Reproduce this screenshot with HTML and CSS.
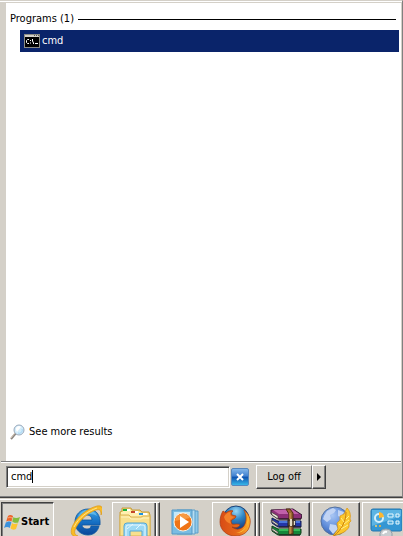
FILE: index.html
```html
<!DOCTYPE html>
<html lang="en">
<head>
    <meta charset="UTF-8">
    <meta name="viewport" content="width=device-width, initial-scale=1.0">
    <title>Start Menu</title>
    <link rel="stylesheet" href="styles.css">
</head>
<body>
    <main class="start-menu">
        <section class="results">
            <h2 class="group-title">Programs (1)</h2>
            <a href="#" class="result selected">
                <svg width="16" height="14" viewBox="0 0 16 14">
                    <rect width="16" height="14" fill="#8c8c84"/>
                    <rect x="1" y="1" width="14" height="2" fill="#d4d0c8"/>
                    <path d="M10 1h1v1h-1zM12 1h1v1h-1zM14 1h1v1h-1z" fill="#555"/>
                    <rect x="1" y="3" width="14" height="10" fill="#000"/>
                    <path d="M5 5.500H3.500L2.500 6.500V8.500L3.500 9.500H5M6.500 6v1M6.500 8.500v1M8.500 5v2l1 2v1M11 9.500h3" fill="none" stroke="#fff"/>
                </svg>
                <span>cmd</span>
            </a>
            <a href="#" class="more">
                <svg width="16" height="16" viewBox="0 0 16 16">
                    <path d="M1 15l5-6" stroke="#8a8580" stroke-width="2"/>
                    <path d="M1 14l4-5" stroke="#d8c8b8"/>
                    <circle cx="9" cy="6" r="5" fill="#d4edfb" stroke="#9aa9bb"/>
                    <path d="M6 6a3 3 0 0 1 5-3L7 8z" fill="#fff"/>
                    <path d="M8 9a3 3 0 0 0 4-4" fill="none" stroke="#a5d6f4"/>
                </svg>
                <span>See more results</span>
            </a>
        </section>

        <form class="search-bar" onsubmit="return false;">
            <div class="search-field">
                <input type="text" name="search" value="cmd" aria-label="Search programs and files">
                <span class="caret"></span>
            </div>
            <button type="reset" class="clear" aria-label="Clear search">
                <svg width="10" height="10" viewBox="0 0 10 10">
                    <path d="M2 2l6 6M8 2l-6 6" stroke="#fff" stroke-width="2"/>
                </svg>
            </button>
            <div class="logoff">
                <button type="button" class="logoff-label">Log off</button>
                <button type="button" class="logoff-arrow" aria-label="More options">
                    <svg width="4" height="8" viewBox="0 0 4 8"><path d="M0 0l4 4-4 4z"/></svg>
                </button>
            </div>
        </form>
    </main>

    <nav class="taskbar">
        <button type="button" class="start-button">
            <svg width="16" height="16" viewBox="0 0 16 16">
                <path d="M4 2q2-2 5 0L8 8Q5 6 2 8z" fill="#ef6328"/>
                <path d="M9 3q3 2 7 0l-2 6q-3 1-6-1z" fill="#83bd3c"/>
                <path d="M2 8q3-2 6 0l-2 6q-3-2-6 0z" fill="#3b91dc"/>
                <path d="M8 9q2 2 6 0l-2 6q-3 2-6-1z" fill="#fdc52f"/>
                <path d="M4 4q2-2 4 0" fill="none" stroke="#f8a878"/>
                <path d="M9 3L6 15M2 8q3-2 6 0t6 1" fill="none" stroke="#e4ddd0" stroke-width="0.600"/>
            </svg>
            <span>Start</span>
        </button>

        <div class="tasks">
            <button type="button" class="task" aria-label="Internet Explorer">
                <svg width="32" height="32" viewBox="0 0 32 32">
                    <defs>
                        <linearGradient id="ie" x2="0" y2="1">
                            <stop offset="0" stop-color="#3ba4e6"/>
                            <stop offset="0.500" stop-color="#1670c4"/>
                            <stop offset="1" stop-color="#0a4798"/>
                        </linearGradient>
                    </defs>
                    <path d="M18 4C10 4 5 10 5 17c0 8 6 13 13 13 6 0 10-4 11-9h-8c0 2-2 3-4 3-3 0-5-2-5-4h18C31 10 26 4 18 4zm-6 11c0-3 2-5 5-5s5 2 5 5z" fill="url(#ie)" stroke="#0d559e" stroke-width="0.800"/>
                    <path d="M7 14C9 8 13 5 18 5c5 0 8 3 9 6-4-3-13-3-20 3z" fill="#8bdaf7" opacity="0.500"/>
                    <path d="M8 31c-6 2-9-3-5-11C8 10 19 3 27 1c6-1 7 3 4 9 0-5-1-6-5-5C17 8 8 17 5 25c-1 3 0 5 3 6z" fill="#f9bb25" stroke="#d69113" stroke-width="0.600"/>
                    <path d="M4 22C9 12 18 6 27 3" fill="none" stroke="#ffe48b"/>
                </svg>
            </button>
            <button type="button" class="task open stacked" aria-label="Windows Explorer">
                <svg width="32" height="32" viewBox="0 0 32 32">
                    <path d="M1 31V7l2-1V3h9l1 2h8l2 2h7l1 3v21z" fill="#efcf70" stroke="#c89f3d"/>
                    <path d="M2 9V7h2V4h7l2 2h7l2 2h7l1 4H2z" fill="#fff0b0"/>
                    <path d="M4 4h7v2H4zM12 6h7v2h-7zM20 8h8v2h-8z" fill="#fff"/>
                    <path d="M4 4h4v2H4z" fill="#19b23b"/>
                    <path d="M12 6h4v2h-4z" fill="#c4472b"/>
                    <path d="M20 8h4v2h-4z" fill="#1d92df"/>
                    <path d="M1 10h9l2 2h10l2-1h7v20H1z" fill="#f8e08e" stroke="#d9b355"/>
                    <path d="M2 12h8l2 2h10l2-1h6" fill="none" stroke="#fff3c0"/>
                    <path d="M5 32V21q0-3 3-3h17q3 0 3 3v11h-5v-6H11v6z" fill="#9cd9f4" stroke="#52a6d5"/>
                    <path d="M7 31v-9q0-2 2-2h15q2 0 2 2v9M8 24L14 19M17 24l5-5" fill="none" stroke="#e4f7ff"/>
                </svg>
            </button>
            <button type="button" class="task" aria-label="Media Player">
                <svg width="32" height="32" viewBox="0 0 32 32">
                    <path d="M10 6h18v22H10z" fill="#8fc9e9" stroke="#5c9fc9"/>
                    <path d="M7 5h18v24H7z" fill="#b6def2" stroke="#5c9fc9"/>
                    <path d="M2 5h20v24H2z" fill="#79bce2" stroke="#5598c6"/>
                    <path d="M4 7h16v5L4 22z" fill="#c4e8f8"/>
                    <circle cx="13" cy="17" r="9" fill="#ef7416" stroke="#fff0dc"/>
                    <path d="M5 16a8 8 0 0 1 15-3z" fill="#f89a42"/>
                    <path d="M10 11l9 6-9 6z" fill="#fff"/>
                </svg>
            </button>
            <button type="button" class="task open stacked" aria-label="Firefox">
                <svg width="32" height="32" viewBox="0 0 32 32">
                    <defs>
                        <radialGradient id="sky" cx="0.500" cy="0.200" r="0.800">
                            <stop offset="0" stop-color="#9bd8f5"/>
                            <stop offset="0.400" stop-color="#2f86c6"/>
                            <stop offset="1" stop-color="#12296d"/>
                        </radialGradient>
                        <linearGradient id="fox" x2="1" y2="0">
                            <stop offset="0" stop-color="#d84b15"/>
                            <stop offset="0.600" stop-color="#e66a1a"/>
                            <stop offset="1" stop-color="#ffb52a"/>
                        </linearGradient>
                    </defs>
                    <circle cx="17" cy="14" r="13" fill="url(#sky)" stroke="#1c4378"/>
                    <path d="M4 6l3 2c2-2 5-3 7-2-2 1-2 3-1 4l4 1c0 3-4 3-5 5l1 3c3 1 6-1 8 1-2 3-5 3-8 2 5 4 11 2 13-3 2-5 1-10-1-14 5 4 7 9 6 14-1 8-7 12-15 12C8 31 1 25 1 17 1 13 2 9 4 6z" fill="url(#fox)" stroke="#a93b10" stroke-width="0.700"/>
                    <path d="M5 12c1-3 4-5 7-5-1 1-1 2 0 4l3 1-4 3 1 4c-3-1-6-3-7-7z" fill="#f4812a"/>
                    <path d="M29 11c2 8-4 16-12 17 8 0 12-6 12-17z" fill="#ffc83a"/>
                </svg>
            </button>
            <button type="button" class="task open" aria-label="WinRAR">
                <svg width="32" height="32" viewBox="0 0 32 32">
                    <path d="M1 5l22-1 9 6-1 4H8L1 9z" fill="#8d2f78" stroke="#32142f"/>
                    <path d="M3 5l19-1 7 5H9z" fill="#c161aa"/>
                    <path d="M2 13l6 3h23v6H8l-6-4z" fill="#2336a8" stroke="#101d52"/>
                    <path d="M9 16h21v2H9z" fill="#4a76dd"/>
                    <path d="M2 21l6 3h23v4l-1 2H8l-6-4z" fill="#14873a" stroke="#0d3b17"/>
                    <path d="M9 24h21v2H9z" fill="#35bc58"/>
                    <path d="M1 7l7 4v3l-6-4zM2 15l6 4v2l-6-4zM2 23l6 4v2l-6-4z" fill="#eee8d7" stroke="#333" stroke-width="0.700"/>
                    <path d="M9 14h22M9 22h22M9 30h21" stroke="#251b20"/>
                    <path d="M16 4h4l3 4v21h-4V9z" fill="#9b6731" stroke="#4c2b12"/>
                    <path d="M20 8v21" stroke="#d8a85a"/>
                    <rect x="18" y="15" width="7" height="6" fill="#6a5b47" stroke="#2a2119"/>
                    <path d="M20 14h2v7h-2zM24 16h1v4h-1z" fill="#e4dcc8"/>
                </svg>
            </button>
            <button type="button" class="task open" aria-label="Web editor">
                <svg width="32" height="32" viewBox="0 0 32 32">
                    <defs>
                        <radialGradient id="globe" cx="0.400" cy="0.300" r="0.700">
                            <stop offset="0" stop-color="#a8c6f4"/>
                            <stop offset="0.600" stop-color="#6390dc"/>
                            <stop offset="1" stop-color="#3764b5"/>
                        </radialGradient>
                    </defs>
                    <circle cx="15" cy="16" r="14" fill="url(#globe)" stroke="#54729f"/>
                    <path d="M4 11l3-5 6-3 3 2-2 3-4 2 1 4-4 3-4-3zM10 19l6 1 2 4-5 5-4-5zM18 5l6 2-2 6-4-2z" fill="#c1d4f4"/>
                    <path d="M27 3c3 3 4 7 3 11l1 2-2 2v4c-3 5-8 7-13 8l-3 1 5-7-1-6 3-3v-4l4-2z" fill="#fbc72c" stroke="#db930f" stroke-width="0.700"/>
                    <path d="M26 7c0 9-4 17-12 24" fill="none" stroke="#c97f13"/>
                    <path d="M26 14l3-3M24 19l5-4M21 24l7-4M24 17l-3-4M22 21l-3-2" fill="none" stroke="#fff08c"/>
                </svg>
            </button>
            <button type="button" class="task open" aria-label="Control Panel">
                <svg width="32" height="32" viewBox="0 0 32 32">
                    <rect x="1" y="4" width="31" height="22" rx="2" fill="#3496d3" stroke="#2377ae"/>
                    <path d="M2 5h29v6L2 21z" fill="#5cb4e3"/>
                    <circle cx="9" cy="13" r="4" fill="#4ba6d9" stroke="#d5f0fc" stroke-width="2"/>
                    <path d="M9 13V7a6 6 0 0 1 5 5z" fill="#ffb72f"/>
                    <path d="M18 9h5v3h-5zM26 9h3v3h-3zM18 16h5v3h-5zM26 16h3v3h-3z" fill="#4ba6d9" stroke="#e6f8ff"/>
                    <circle cx="6" cy="21" r="1" fill="#ffd463"/>
                    <circle cx="10" cy="21" r="1" fill="#ffb72f"/>
                    <path d="M10 32q-1-8 6-8 7 0 6 8z" fill="#c9cdd0" stroke="#8e9da8"/>
                    <path d="M13 29q1-3 4-2" fill="none" stroke="#fff" stroke-width="2"/>
                </svg>
            </button>
        </div>
    </nav>
</body>
</html>
```
FILE: styles.css
```css
* {
    box-sizing: border-box;
}
body {
    margin: 0;
    height: 100vh;
    display: flex;
    flex-direction: column;
    overflow: hidden;
    background-color: #d4d0c8;
    color: #000;
    font-family: Tahoma, "DejaVu Sans Condensed", sans-serif;
    font-size: 11px;
    line-height: 14px;
}
button, input {
    font: inherit;
    color: inherit;
    margin: 0;
    padding: 0;
    border: none;
    border-radius: 0;
}
svg {
    display: block;
    flex: none;
}
a {
    color: inherit;
    text-decoration: none;
}

/* Menu window */
.start-menu {
    flex: 1;
    min-height: 0;
    display: flex;
    flex-direction: column;
    border-top: 1px solid #d4d0c8;
    border-right: 1px solid #808080;
    border-bottom: 1px solid #404040;
    box-shadow: inset 0 1px #fff, inset 0 -1px #808080;
    padding: 2px 1px 1px 1px;
}
.results {
    flex: 1;
    display: flex;
    flex-direction: column;
    background-color: #fff;
    margin-left: 5px;
    padding: 9px 2px 21px 4px;
}
.group-title {
    display: flex;
    align-items: center;
    gap: 4px;
    margin: 0 3px 4px 0;
    font-size: 11px;
    font-weight: normal;
}
.group-title::after {
    content: "";
    flex: 1;
    height: 1px;
    background-color: #000;
}
.result {
    display: flex;
    align-items: center;
    gap: 2px;
    height: 22px;
    margin-left: 10px;
    padding-left: 4px;
}
.result.selected {
    background-color: #0a246a;
    color: #fff;
}
.more {
    display: flex;
    align-items: center;
    gap: 3px;
    margin-top: auto;
}

/* Search row */
.search-bar {
    display: flex;
    align-items: center;
    height: 35px;
    border-top: 1px solid #808080;
    box-shadow: inset 0 1px #fff;
    padding: 0 0 5px 5px;
}
.search-field {
    position: relative;
    flex: 0 1 224px;
}
.search-field input {
    display: block;
    width: 100%;
    height: 22px;
    padding: 0 4px;
    background-color: #fff;
    border: 1px solid;
    border-color: #808080 #fff #fff #808080;
    box-shadow: inset 1px 1px #404040, inset -1px -1px #d4d0c8;
    outline: none;
}
.caret {
    position: absolute;
    left: 26px;
    top: 4px;
    width: 1px;
    height: 13px;
    background-color: #000;
}
.clear {
    display: flex;
    align-items: center;
    justify-content: center;
    width: 18px;
    height: 18px;
    margin: 0 7px 0 1px;
    border: 1px solid #5687bd;
    border-radius: 2px;
    background: linear-gradient(#82b6e9, #3f80cf 45%, #0d50ae 50%, #38b7e8);
}
.logoff {
    display: flex;
    height: 24px;
}
.logoff button {
    display: flex;
    align-items: center;
    justify-content: center;
    background-color: #d4d0c8;
    border: 1px solid;
    border-color: #fff #808080 #404040 #fff;
    box-shadow: inset 0 -1px #808080;
}
.logoff .logoff-label {
    width: 56px;
}
.logoff .logoff-arrow {
    width: 14px;
    border-right-color: #404040;
    box-shadow: inset -1px -1px #808080;
}

/* Taskbar */
.taskbar {
    flex: none;
    display: flex;
    align-items: flex-start;
    gap: 8px;
    height: 38px;
    overflow: hidden;
    border-top: 1px solid #d4d0c8;
    box-shadow: inset 0 1px #fff;
    padding: 3px 0 0 1px;
}
.start-button {
    flex: none;
    display: flex;
    align-items: center;
    gap: 1px;
    width: 53px;
    height: 40px;
    background-color: #dad7d0;
    border: 1px solid;
    border-color: #404040 #fff #fff #404040;
    box-shadow: inset 1px 1px #808080;
    padding-left: 2px;
    font-weight: bold;
}
.tasks {
    display: flex;
    gap: 2px;
}
.task {
    position: relative;
    flex: none;
    display: flex;
    justify-content: center;
    width: 48px;
    height: 40px;
    padding-top: 2px;
    background-color: transparent;
    border: 1px solid transparent;
}
.task.open {
    border-color: #fff #404040 #404040 #fff;
    box-shadow: inset -1px 0 #808080;
}
.task.stacked {
    padding-right: 3px;
}
/* right edge of the front window in a stack */
.task.stacked::after {
    content: "";
    position: absolute;
    top: 0;
    right: 2px;
    width: 3px;
    height: 100%;
    background: linear-gradient(to right, #808080 1px, #404040 1px 2px, #fff 2px);
}
```
